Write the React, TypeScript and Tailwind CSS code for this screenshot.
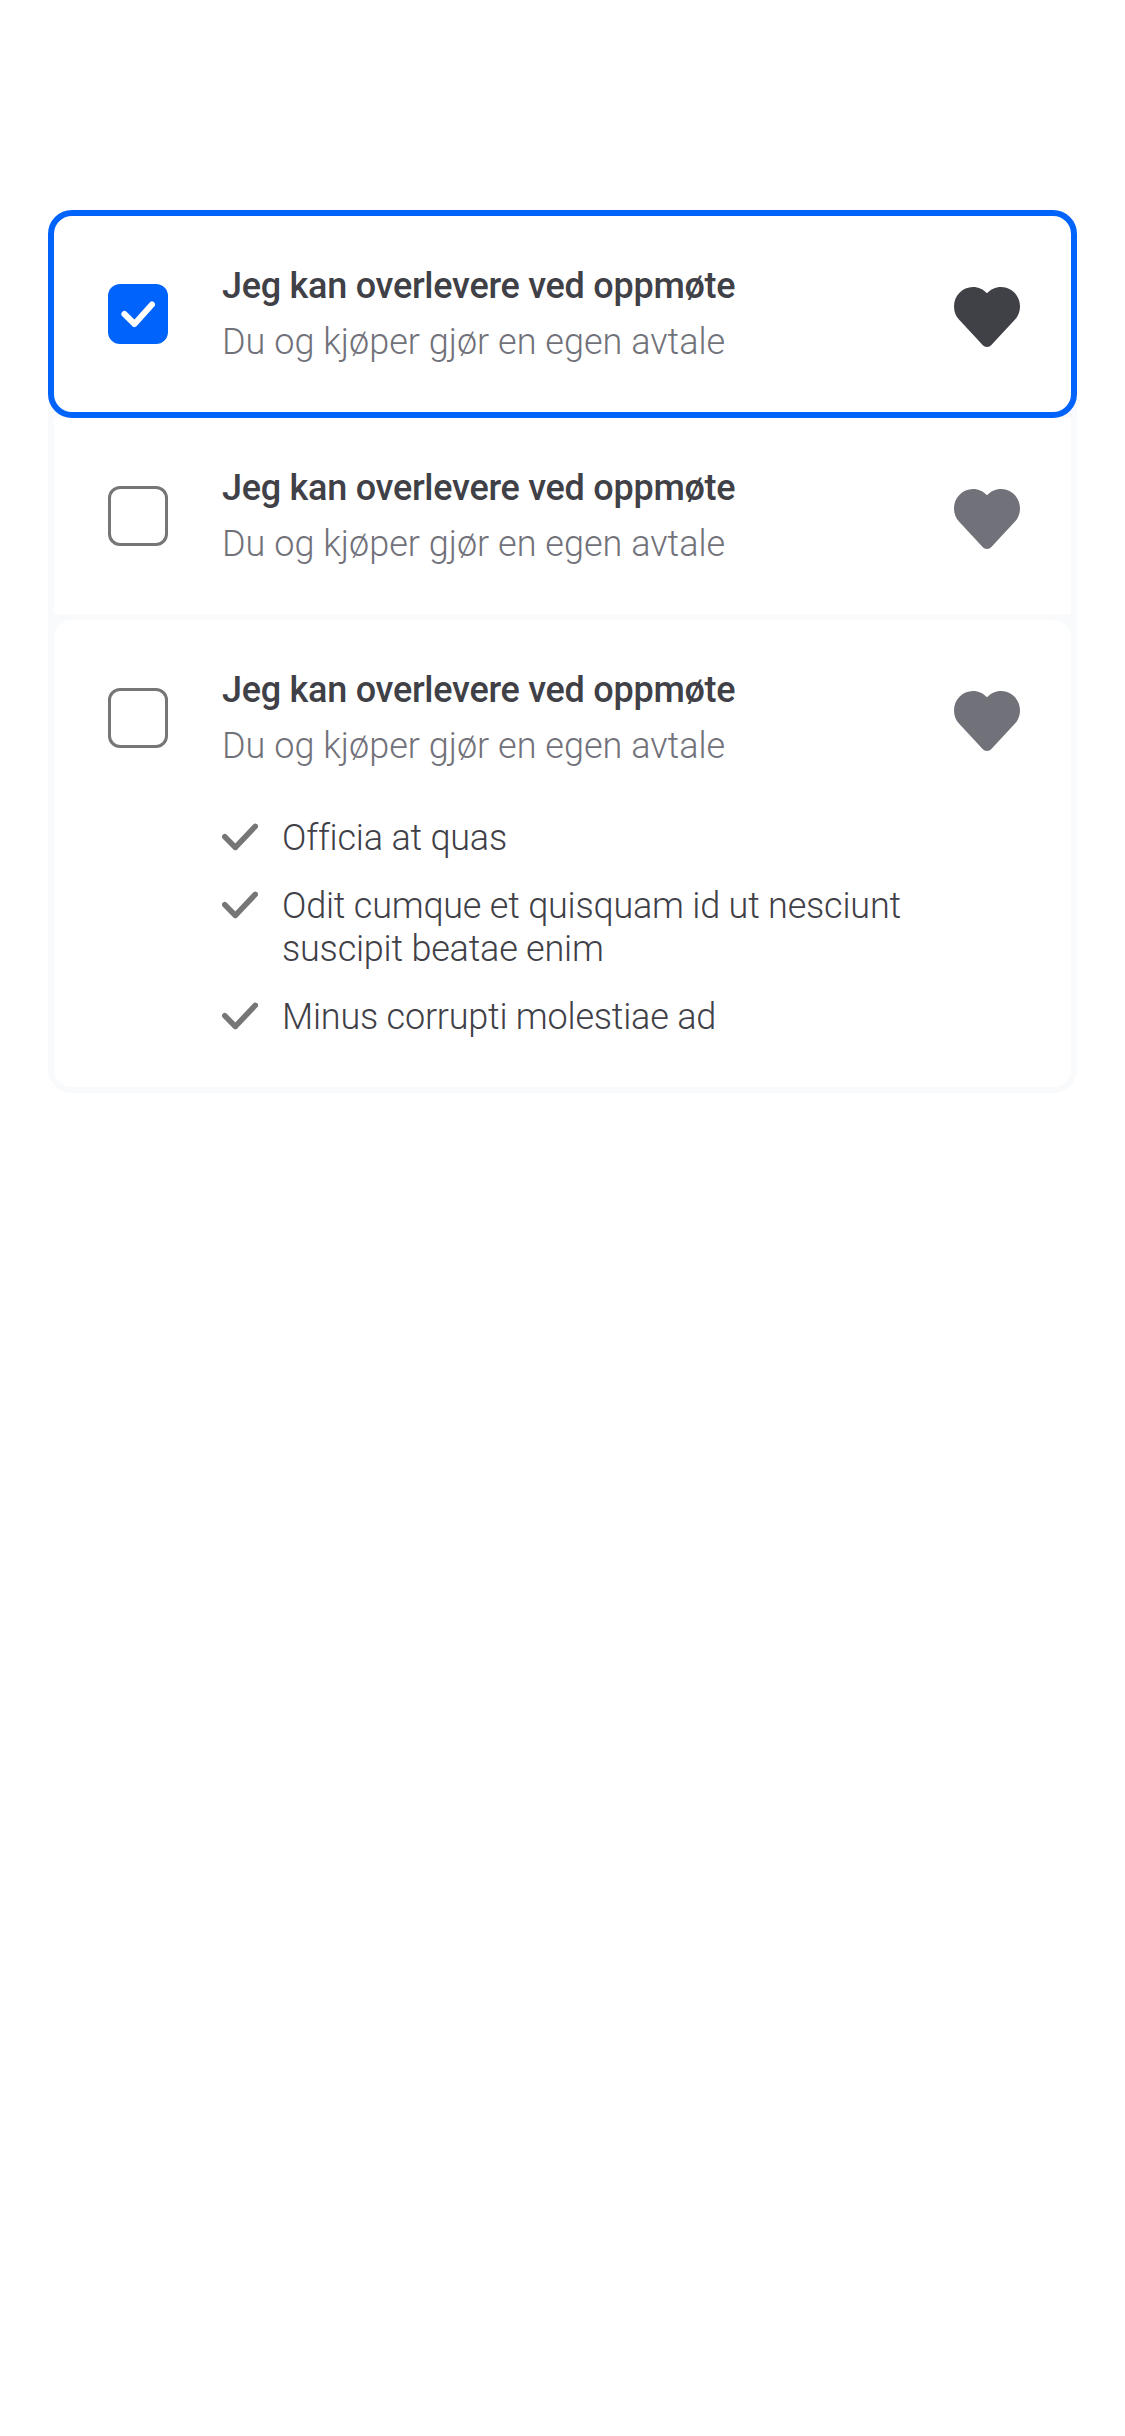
import clsx from "clsx";

function Heart({ active }: { active?: boolean }) {
  return (
    <svg
      viewBox="0 0 66 60"
      className={clsx("mt-[71px] h-[60px] w-[66px] shrink-0", active ? "text-[#404047]" : "text-[#71717a]")}
      fill="currentColor"
    >
      <path d="M33 6.3C29.5 2.3 24.5 0 19 0C8.5 0 0 8.6 0 19.5C0 24.4 1.8 29.2 5.2 32.8L28.4 57.7C31 60.7 35 60.7 37.6 57.7L60.8 32.8C64.2 29.2 66 24.4 66 19.5C66 8.6 57.5 0 47 0C41.5 0 36.5 2.3 33 6.3Z" />
    </svg>
  );
}

function Checkbox({ checked }: { checked?: boolean }) {
  return (
    <div
      className={clsx(
        "mt-[68px] size-[60px] shrink-0 rounded-xl",
        checked ? "bg-[#0063fb]" : "border-3 border-[#767676] bg-white",
      )}
    >
      {checked && (
        <svg viewBox="0 0 60 60" className="size-[60px]" fill="none" stroke="white" strokeWidth="6" strokeLinecap="round" strokeLinejoin="round">
          <path d="M16.4 30L26.5 40L44 20.4" />
        </svg>
      )}
    </div>
  );
}

function Bullet({ children }: { children: string }) {
  return (
    <li className="flex">
      <svg viewBox="0 0 36 36" className="mt-1 mr-6 size-9 shrink-0" fill="none" stroke="#767676" strokeWidth="5.6" strokeLinecap="round" strokeLinejoin="round">
        <path d="M2.8 15.8L13.4 26.4L33.2 5.4" />
      </svg>
      <span className="tracking-[-0.21px]">{children}</span>
    </li>
  );
}

function Option({ selected, items, className }: { selected?: boolean; items?: string[]; className: string }) {
  return (
    <div className={clsx("flex border-6 pr-[51px] pl-[54px]", className)}>
      <Checkbox checked={selected} />
      <div className="ml-[54px] grow pt-[49px] text-[36px] leading-[43px]">
        <p className="font-medium tracking-[-0.27px] text-[#404047]">Jeg kan overlevere ved oppmøte</p>
        <p className="mt-[13px] font-light tracking-[0.02px] text-[#71717a]">Du og kjøper gjør en egen avtale</p>
        {items && (
          <ul className="mt-[49px] flex w-[680px] flex-col gap-[25px] font-light text-[#404047]">
            {items.map((item) => (
              <Bullet key={item}>{item}</Bullet>
            ))}
          </ul>
        )}
      </div>
      <Heart active={selected} />
    </div>
  );
}

export default function App() {
  return (
    <main className="min-h-[2436px] bg-white px-12 pt-[210px] font-['Roboto',sans-serif]">
      <div className="rounded-3xl bg-[#f8fafc]">
        <Option selected className="relative z-10 h-[208px] rounded-3xl border-[#0063fb] bg-white" />
        <Option className="-mt-1.5 h-[208px] border-[#f8fafc] bg-white" />
        <Option
          className="-mt-1.5 h-[479px] rounded-3xl border-[#f8fafc] bg-white"
          items={["Officia at quas", "Odit cumque et quisquam id ut nesciunt suscipit beatae enim", "Minus corrupti molestiae ad"]}
        />
      </div>
    </main>
  );
}
